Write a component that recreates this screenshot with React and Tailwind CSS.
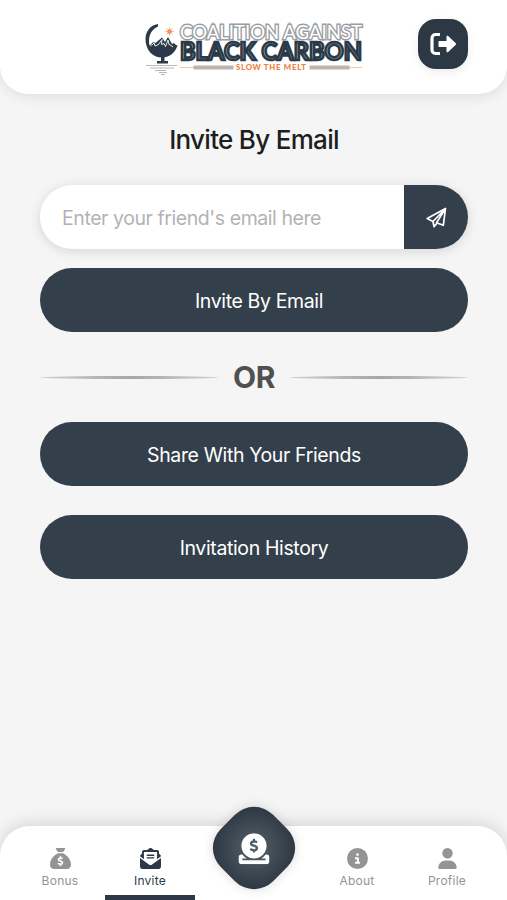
import { FaCircleDollarToSlot, FaCircleInfo, FaEnvelopeOpenText, FaSackDollar, FaUser } from 'react-icons/fa6'
import clsx from 'clsx'

const NAV_LEFT = [
  { label: 'Bonus', icon: FaSackDollar },
  { label: 'Invite', icon: FaEnvelopeOpenText, active: true },
]

const NAV_RIGHT = [
  { label: 'About', icon: FaCircleInfo },
  { label: 'Profile', icon: FaUser },
]

function Logo() {
  return (
    <svg viewBox="0 0 220 54" className="w-[220px] h-[54px] overflow-visible" fontFamily="Lato, sans-serif">
      {/* Globe stand */}
      <path d="M14 2C6 3 1.500 10 1.500 17c0 11 7 18.500 16.500 18.500 7 0 13-4 15.500-12l-3-1-25 1C4 16 6 8 14 4.500z" fill="#2b3a48" />
      <path d="M4.500 25l4.500-5 2.500 1 6.500-5.500 3 4.500 3-5 4 7 2-1 3.500 4z" fill="#2b3a48" />
      <path d="M6.500 24l3.500-3 1 3 3.500-1.500 3.500-5-.5 5 2.500-1 1.500 3 2.500-6.500 1 4.500 2 1 2 1.500" stroke="#fff" strokeWidth=".9" fill="none" />
      <path d="M17 35h3.500v4H24v2.500H13V39h4z" fill="#2b3a48" />
      <circle cx="25.500" cy="9.500" r="2.300" fill="#f47a2c" />
      <path d="M25.500 5v9M21 9.500h9M22.500 6.500l6 6M28.500 6.500l-6 6" stroke="#f3a064" strokeWidth=".6" />
      <path d="M2 43.500h31M6 46h24M11 48.500h11M15 50.500h8M17 52.500h4" stroke="#b0b0b0" strokeWidth=".9" />

      <text x="36" y="16.800" fontSize="19.500" fontWeight="400" textLength="182" lengthAdjust="spacingAndGlyphs" fill="#fff" stroke="#9a9ea2" strokeWidth="3" paintOrder="stroke">COALITION AGAINST</text>
      <text x="36" y="37.500" fontSize="24" fontWeight="700" textLength="182" lengthAdjust="spacingAndGlyphs" fill="#a3adb6" stroke="#2b3a48" strokeWidth="2.500">BLACK CARBON</text>
      <path d="M36 45.500h14M204 45.500h14" stroke="#f2c4a0" strokeWidth="1" />
      <path d="M49.500 45.500h40M165.500 45.500h40" stroke="#bdb4ae" strokeWidth="4" />
      <text x="92" y="48.300" fontSize="7.800" fontWeight="900" textLength="70" fill="#ed803c">SLOW THE MELT</text>
    </svg>
  )
}

function LogoutIcon() {
  return (
    <svg viewBox="0 0 27 24" className="w-[27px] h-6" fill="none">
      <path d="M10 2.500H5.500a3.500 3.500 0 0 0-3.500 3.500v12a3.500 3.500 0 0 0 3.500 3.500H10" stroke="currentColor" strokeWidth="3.200" />
      <path d="M9.500 9h7V4.800c0-1.200 1-1.500 1.700-.8l7.600 7.300c.4.400.4 1 0 1.400l-7.600 7.300c-.7.700-1.700.4-1.700-.8V15h-7c-.6 0-1-.4-1-1v-4c0-.6.400-1 1-1z" fill="currentColor" />
    </svg>
  )
}

function PlaneIcon() {
  return (
    <svg viewBox="0 0 21 21" className="size-[21px]" fill="none" stroke="currentColor" strokeWidth="1.700" strokeLinejoin="round">
      <path d="M19.500 1.500L1.200 11.500 7 14.500 19.500 1.500 17.300 18.300 10.500 15.700z" />
      <path d="M7 14.500L8 19.600 11.200 16" />
    </svg>
  )
}

function PillButton({ children, className }) {
  return (
    <button className={clsx('w-full h-16 pt-[3px] rounded-full bg-[#343f4c] text-white text-[19.5px] tracking-[-0.37px]', className)}>
      {children}
    </button>
  )
}

function NavItem({ label, icon: Icon, active }) {
  return (
    <button className={clsx('relative w-[90px] h-full pt-[22px] flex flex-col items-center', active ? 'text-[#2d3946]' : 'text-[#949494]')}>
      <Icon size={21} />
      <span className="mt-1 text-xs leading-4 tracking-[0.25px]">{label}</span>
      {active && <span className="absolute bottom-0 inset-x-0 h-[5px] bg-[#2d3946]" />}
    </button>
  )
}

export default function App() {
  return (
    <div className="w-full h-screen overflow-hidden bg-[#f5f5f5] flex flex-col font-['Inter',sans-serif]">
      {/* Header */}
      <header className="relative h-[94px] shrink-0 bg-white rounded-b-[28px] shadow-[0_2px_14px_rgba(0,0,0,0.1)] pt-[22px] flex justify-center">
        <Logo />
        <button className="absolute right-[39px] top-[19px] size-[50px] rounded-[18px] bg-[#2c3945] text-white flex items-center justify-center shadow-[0_3px_10px_rgba(0,0,0,0.08)]">
          <LogoutIcon />
        </button>
      </header>

      <main className="flex-1 pl-10 pr-[39px]">
        <h1 className="mt-[29px] text-center text-[26px] leading-[34px] font-medium tracking-[-0.7px] text-[#1c1f21]">Invite By Email</h1>

        <div className="mt-7 h-16 flex rounded-full overflow-hidden bg-white shadow-[0_2px_12px_rgba(0,0,0,0.13)]">
          <input
            type="email"
            placeholder="Enter your friend's email here"
            className="flex-1 min-w-0 pt-[3px] pl-[22px] text-[19.5px] tracking-[-0.43px] outline-none placeholder:text-[#b3b3b3]"
          />
          <button className="w-16 bg-[#343f4c] text-white flex items-center justify-center">
            <PlaneIcon />
          </button>
        </div>

        <PillButton className="mt-[19px] pl-2.5">Invite By Email</PillButton>

        <div className="mt-[25px] h-10 flex items-center gap-3.5 text-[#505050]">
          <span className="flex-1 h-[3px] rounded-[50%] bg-linear-to-r from-[#cfcfcf] via-[#a6a6a6] to-[#cfcfcf]" />
          <span className="text-[30px] font-bold tracking-[-0.5px]">OR</span>
          <span className="flex-1 h-[3px] rounded-[50%] bg-linear-to-r from-[#cfcfcf] via-[#a6a6a6] to-[#cfcfcf]" />
        </div>

        <PillButton className="mt-[25px]">Share With Your Friends</PillButton>
        <PillButton className="mt-[29px]">Invitation History</PillButton>
      </main>

      {/* Bottom nav */}
      <nav className="relative h-[74px] shrink-0 px-[15px] flex justify-between bg-white rounded-t-[30px] shadow-[0_-3px_16px_rgba(0,0,0,0.13)]">
        <div className="flex">
          {NAV_LEFT.map((item) => <NavItem key={item.label} {...item} />)}
        </div>
        <button className="absolute left-1/2 -translate-x-1/2 top-[-15px] size-[74px] rotate-45 rounded-[27px] bg-radial from-[#56616c] to-[#232e38] text-white flex items-center justify-center shadow-[0_0_12px_rgba(0,0,0,0.15)]">
          <FaCircleDollarToSlot size={31} className="-rotate-45" />
        </button>
        <div className="flex">
          {NAV_RIGHT.map((item) => <NavItem key={item.label} {...item} />)}
        </div>
      </nav>
    </div>
  )
}
